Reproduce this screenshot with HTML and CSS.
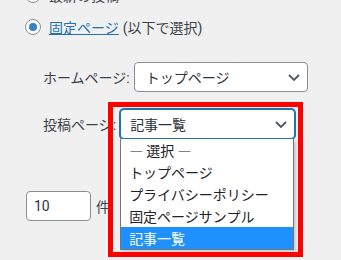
FILE: index.html
```html
<!DOCTYPE html>
<html lang="ja">
<head>
  <meta charset="UTF-8">
  <title>表示設定</title>
  <link rel="stylesheet" href="styles.css">
</head>
<body>
  <div class="reading">
    <ul class="front-radios">
      <li><span class="radio"></span>最新の投稿</li>
      <li><span class="radio checked"></span><a href="#">固定ページ</a> (以下で選択)</li>
    </ul>

    <ul class="page-selects">
      <li>
        <span class="label">ホームページ:</span>
        <div class="select">
          <span>トップページ</span>
          <svg class="chevron" width="12" height="7" viewBox="0 0 12 7"><path d="M1 1l5 5 5-5" fill="none" stroke="#50575e" stroke-width="1.8"/></svg>
        </div>
      </li>
      <li>
        <span class="label">投稿ページ:</span>
        <div class="select focused">
          <span>記事一覧</span>
          <svg class="chevron" width="12" height="7" viewBox="0 0 12 7"><path d="M1 1l5 5 5-5" fill="none" stroke="#50575e" stroke-width="1.8"/></svg>
          <ul class="options">
            <li>— 選択 —</li>
            <li>トップページ</li>
            <li>プライバシーポリシー</li>
            <li>固定ページサンプル</li>
            <li class="selected">記事一覧</li>
          </ul>
          <div class="callout"></div>
        </div>
      </li>
    </ul>

    <div class="per-page">
      <span class="number">10</span>
      <span>件</span>
    </div>
  </div>
</body>
</html>
```

FILE: styles.css
```css
html {
  background: #f0f0f1;
}

body {
  margin: 0;
  min-height: 260px;
  background: #f0f0f1;
  color: #3c434a;
  font-family: Roboto, "Noto Sans CJK JP", sans-serif;
  font-size: 14px;
}

.reading {
  padding-left: 25px;
}

.front-radios {
  list-style: none;
  margin: -21px 0 0;
  padding: 0;
}

.front-radios li {
  height: 32px;
  display: flex;
  align-items: center;
  gap: 8px;
}

.front-radios a {
  color: #2271b1;
  text-decoration: underline;
  margin-right: -4px;
}

.radio {
  width: 14px;
  height: 14px;
  border: 1px solid #8c8f94;
  border-radius: 50%;
  background: #fff;
  display: flex;
  align-items: center;
  justify-content: center;
}

.radio.checked::before {
  content: "";
  width: 8px;
  height: 8px;
  border-radius: 50%;
  background: #3582c4;
}

.page-selects {
  list-style: none;
  margin: 19px 0 0;
  padding: 0 0 0 18px;
  display: flex;
  flex-direction: column;
  gap: 17px;
}

.page-selects > li {
  display: flex;
  align-items: center;
  gap: 4px;
}

.select {
  position: relative;
  box-sizing: border-box;
  width: 174px;
  height: 30px;
  padding: 0 7px 0 11px;
  border: 1px solid #8c8f94;
  border-radius: 4px;
  background: #fff;
  color: #2c3338;
  display: flex;
  align-items: center;
  justify-content: space-between;
}

.select.focused {
  padding-left: 9px;
  border-color: #2271b1;
  box-shadow: 0 0 0 1px #2271b1;
  width: 175px;
}

.options {
  position: absolute;
  z-index: 2;
  left: -1px;
  top: calc(100% + 1px);
  width: 174px;
  box-sizing: border-box;
  margin: 0;
  padding: 0;
  list-style: none;
  background: #fff;
  border: 1px solid #767676;
  border-top: none;
  box-shadow: 2px 2px 2px rgba(0, 0, 0, 0.15);
  color: #1d2327;
  font-family: "Noto Sans CJK JP", sans-serif;
}

.options li {
  height: 22px;
  line-height: 22px;
  padding-left: 8px;
}

.options li.selected {
  background: #1e90ff;
  color: #fff;
}

.callout {
  position: absolute;
  z-index: 3;
  left: -13px;
  top: -8px;
  width: 185px;
  height: 145px;
  border: 5px solid #ff0000;
  pointer-events: none;
}

.per-page {
  margin-top: 52px;
  margin-left: 1px;
  display: flex;
  align-items: center;
  gap: 5px;
}

.number {
  box-sizing: border-box;
  width: 65px;
  height: 30px;
  padding-left: 7px;
  border: 1px solid #8c8f94;
  border-radius: 4px;
  background: #fff;
  color: #2c3338;
  display: flex;
  align-items: center;
}
```
